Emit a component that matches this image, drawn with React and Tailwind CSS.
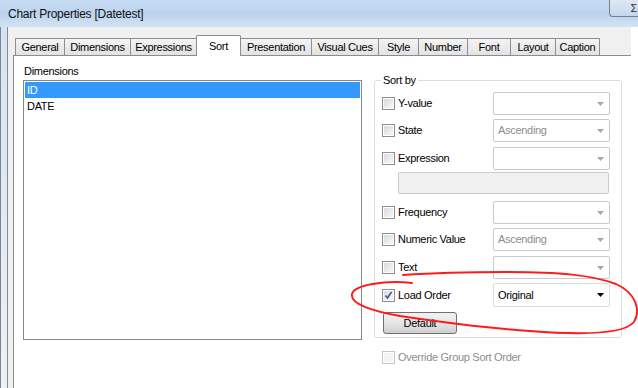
import React from 'react';

const tabs = [
  { label: 'General', w: 'w-[49px]' },
  { label: 'Dimensions', w: 'w-[66px]' },
  { label: 'Expressions', w: 'w-[66px]' },
  { label: 'Sort', w: 'w-[45px]', active: true },
  { label: 'Presentation', w: 'w-[70px]' },
  { label: 'Visual Cues', w: 'w-[67px]' },
  { label: 'Style', w: 'w-[40px]' },
  { label: 'Number', w: 'w-[49px]' },
  { label: 'Font', w: 'w-[43px]' },
  { label: 'Layout', w: 'w-[45px]' },
  { label: 'Caption', w: 'w-[45px]', last: true },
];

function CheckBox({ checked, disabled }) {
  return (
    <div className={`w-[13px] h-[13px] shrink-0 border ${disabled ? 'border-[#c6c6c6]' : 'border-[#8e8f8f]'} bg-white p-px`}>
      <div className={`w-full h-full relative ${disabled ? 'bg-[#f4f4f4]' : 'bg-gradient-to-br from-[#dadada] to-[#f8f8f8]'}`}>
        {checked && (
          <svg className="absolute inset-0" width="9" height="9" viewBox="0 0 9 9">
            <path d="M1.5 4.5 L3.5 7 L7.5 1" fill="none" stroke="#3c5a9a" strokeWidth="1.6" />
          </svg>
        )}
      </div>
    </div>
  );
}

function Combo({ value, active, gray }) {
  return (
    <div className={`w-[117px] h-full flex items-center justify-between border rounded-[2px] bg-white pl-[4px] pr-[5px] ${active ? 'border-[#dcdcdc]' : 'border-[#c9c9c9]'}`}>
      <span className={gray ? 'text-[#8d8d8d]' : 'text-black'}>{value}</span>
      <svg width="7" height="4" viewBox="0 0 7 4">
        <path d="M0 0 H7 L3.5 4 Z" fill={active ? '#000' : '#a8a8a8'} />
      </svg>
    </div>
  );
}

function SortRow({ label, value, gray, checked, active, mt }) {
  return (
    <div className={`flex items-center h-[23px] ${mt}`}>
      <div className="w-[111px] flex items-center gap-[3px]">
        <CheckBox checked={checked} />
        <span>{label}</span>
      </div>
      <Combo value={value} gray={gray} active={active} />
    </div>
  );
}

export default function App() {
  return (
    <div className="w-[638px] h-[388px] overflow-hidden relative bg-white font-['Liberation_Sans',Arial,sans-serif] text-[11px] tracking-[-0.3px] text-black flex flex-col">
      {/* title bar (aero glass) */}
      <div className="h-[27px] shrink-0 flex items-center relative bg-gradient-to-b from-[#c7dcf3] via-[#bcd3ee] to-[#d3e3f5]">
        <span className="ml-[8px] text-[12px] tracking-[-0.25px] text-[#111]">Chart Properties [Datetest]</span>
        <div className="ml-auto self-start w-[29px] h-[17px] border-l border-b border-[#6f7f95] rounded-bl-[4px] bg-gradient-to-b from-[#dfe9f5] to-[#c5d6ea] flex items-center justify-end pr-[1px]">
          <span className="text-[11px] text-[#333] leading-none">Σ</span>
        </div>
      </div>

      <div className="flex-1 flex min-h-0">
        {/* left frame */}
        <div className="w-[7px] shrink-0 border-l border-[#7b8594] bg-gradient-to-b from-[#d4e3f4] to-[#eef1f5]" />

        {/* client */}
        <div className="w-[624px] shrink-0 border-l border-[#8a8a8a] bg-[#f0f0f0] pl-[5px] pt-[8px] flex flex-col">
          <div className="flex items-end h-[20px] ml-[2px]">
            {tabs.map((t) =>
              t.active ? (
                <div key={t.label} className={`${t.w} h-[21px] mb-[-1px] relative z-10 bg-white border-l border-t border-r border-[#898c95] rounded-t-[2px] flex items-start justify-center pt-[2px]`}>
                  {t.label}
                </div>
              ) : (
                <div key={t.label} className={`${t.w} h-[17px] bg-gradient-to-b from-[#f4f4f4] to-[#e2e2e2] border-t border-l ${t.last ? 'border-r' : ''} ${t.label === 'Presentation' ? 'border-l-0' : ''} border-[#8c8e94] flex items-center justify-center`}>
                  {t.label}
                </div>
              )
            )}
          </div>

          {/* tab page */}
          <div className="flex-1 bg-white border-t border-l border-[#898c95] flex">
            <div className="pl-[9px] pt-[8px] flex flex-col">
              <div className="h-[14px] leading-[14px] pl-px mb-[2px]">Dimensions</div>
              <div className="w-[339px] h-[260px] border border-[#828790] p-px">
                <div className="h-[16px] bg-[#3399ff] text-white pl-[2px] leading-[16px]">ID</div>
                <div className="h-[16px] pl-[2px] leading-[16px]">DATE</div>
              </div>
            </div>

            <div className="ml-[12px] mt-[24px] flex flex-col">
              <div className="relative w-[248px] h-[258px] border border-[#d5dfe5] rounded-[3px] pl-[7px] flex flex-col">
                <span className="absolute left-[6px] top-[-8px] bg-white px-[2px] leading-[14px]">Sort by</span>
                <SortRow label="Y-value" value="" mt="mt-[11px]" />
                <SortRow label="State" value="Ascending" gray mt="mt-[4px]" />
                <SortRow label="Expression" value="" mt="mt-[5px]" />
                <div className="ml-[16px] mt-[2px] w-[211px] h-[22px] bg-[#f0f0f0] border border-[#cbcbcb] rounded-[2px]" />
                <SortRow label="Frequency" value="" mt="mt-[7px]" />
                <SortRow label="Numeric Value" value="Ascending" gray mt="mt-[4px]" />
                <SortRow label="Text" value="" mt="mt-[5px]" />
                <div className="flex items-center h-[24px] mt-[4px]">
                  <div className="w-[111px] flex items-center gap-[3px]">
                    <CheckBox checked />
                    <span>Load Order</span>
                  </div>
                  <Combo value="Original" active />
                </div>
                <button className="mt-[5px] ml-px w-[74px] h-[22px] border border-[#707070] rounded-[3px] bg-gradient-to-b from-[#f2f2f2] via-[#e6e6e6] to-[#cfcfcf] flex items-center justify-center text-[11px] tracking-[-0.3px]">
                  Default
                </button>
              </div>
              <div className="mt-[11px] ml-[8px] flex items-center gap-[3px] text-[#8d8d8d]">
                <CheckBox disabled />
                <span>Override Group Sort Order</span>
              </div>
            </div>
          </div>
        </div>

        <div className="flex-1 bg-white" />
      </div>

      {/* red hand-drawn annotation */}
      <svg className="absolute inset-0 pointer-events-none" width="638" height="388" viewBox="0 0 638 388">
        <path
          d="M412 283 C385 280 354 285 352 294 C350 304 372 311 400 316 C440 322 485 328 530 331 C580 335 624 334 634 322 C641 310 636 293 616 284 C592 275 560 272 505 272 C465 272 432 273 403 275"
          fill="none"
          stroke="#ff1a1a"
          strokeWidth="1.9"
          strokeLinecap="round"
        />
      </svg>
    </div>
  );
}
